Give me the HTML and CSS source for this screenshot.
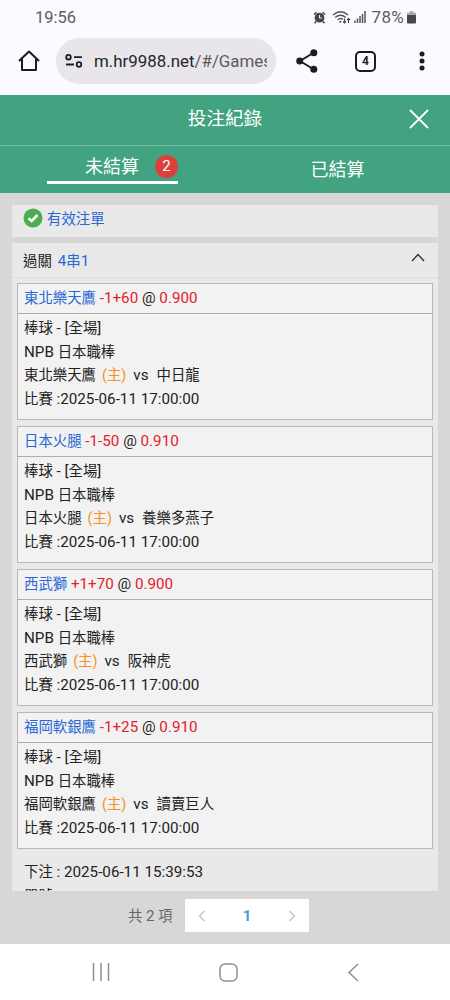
FILE: index.html
```html
<!DOCTYPE html>
<html lang="zh-Hant">
<head>
  <meta charset="UTF-8">
  <meta name="viewport" content="width=device-width, initial-scale=1">
  <title>投注紀錄</title>
  <link rel="stylesheet" href="styles.css">
</head>
<body>
<div class="status-bar">
  <span class="clock">19:56</span>
  <div class="status-icons">
    <svg class="alarm" width="13" height="13" viewBox="0 0 13 13">
      <circle cx="6.5" cy="6.7" r="4.9" fill="#46464c"/>
      <path d="M1 3.5L3.5 1.2M12 3.5L9.5 1.2M3 10.5L1.5 12.3M10 10.5L11.5 12.3" stroke="#46464c" stroke-width="1.5" fill="none"/>
      <path d="M6.5 4V7H8.8" stroke="#fbfaff" stroke-width="1" fill="none"/>
    </svg>
    <svg class="wifi" width="19" height="15" viewBox="0 0 19 15">
      <path d="M1 5Q8.500-1.500 16 5M3.200 7.500Q8.500 3 13.800 7.500M5.500 9.800Q8.500 7.300 11 9.500" stroke="#55555b" stroke-width="1.300" fill="none"/>
      <circle cx="8.300" cy="11.800" r="1.100" fill="#55555b"/>
      <path d="M12.500 8.500V13M11 11.500L12.500 13L14 11.500M16.500 13V8.500M15 10L16.500 8.500L18 10" stroke="#46464c" stroke-width="1.100" fill="none"/>
    </svg>
    <svg class="signal" width="12" height="12" viewBox="0 0 12 12">
      <path d="M1 12V9.500M3.500 12V7.500M6 12V5M8.500 12V3M11 12V0" stroke="#55555b" stroke-width="1.500"/>
    </svg>
    <span class="battery-text">78%</span>
    <svg class="battery" width="9" height="13" viewBox="0 0 9 13">
      <path d="M3 0H6V1.500H8Q9 1.500 9 2.500V4H0V2.500Q0 1.500 1 1.500H3Z" fill="#a9a9ae"/>
      <path d="M0 4H9V11.500Q9 12.500 8 12.500H1Q0 12.500 0 11.500Z" fill="#46464c"/>
    </svg>
  </div>
</div>

<div class="browser-bar">
  <svg class="home" width="22" height="22" viewBox="0 0 22 22">
    <path d="M1 11L11 1.500L21 11M4 9V20H18V9" stroke="#1b1b21" stroke-width="2" fill="none" stroke-linejoin="round"/>
  </svg>
  <div class="address">
    <svg width="18" height="14" viewBox="0 0 18 14" stroke="#1f1f25" stroke-width="1.800" fill="none">
      <circle cx="3.500" cy="3.200" r="2.300"/>
      <path d="M9 3.200H17M1 10.500H9"/>
      <circle cx="14" cy="10.500" r="2.300"/>
    </svg>
    <span class="url">m.hr9988.net<span class="path">/#/Games</span></span>
  </div>
  <svg class="share" width="22" height="24" viewBox="0 0 22 24">
    <path d="M18 3.500L4 12L18 20.500" stroke="#1b1b21" stroke-width="2" fill="none"/>
    <g fill="#1b1b21">
      <circle cx="17.800" cy="3.700" r="3.500"/>
      <circle cx="3.700" cy="12" r="3.500"/>
      <circle cx="17.800" cy="20.300" r="3.500"/>
    </g>
  </svg>
  <span class="tab-count">4</span>
  <svg class="more" width="6" height="20" viewBox="0 0 6 20" fill="#1b1b21">
    <circle cx="3" cy="3" r="2.500"/>
    <circle cx="3" cy="10" r="2.500"/>
    <circle cx="3" cy="17" r="2.500"/>
  </svg>
</div>

<header class="header">
  <h1>投注紀錄</h1>
  <svg class="close" width="20" height="20" viewBox="0 0 20 20">
    <path d="M1 1L19 19M19 1L1 19" stroke="#fff" stroke-width="1.800"/>
  </svg>
</header>
<nav class="tabs">
  <div class="tab active"><span>未結算</span><span class="badge">2</span></div>
  <div class="tab"><span>已結算</span></div>
</nav>

<main class="main">
  <div class="list">
    <div class="valid">
      <svg width="20" height="20" viewBox="0 0 20 20">
        <circle cx="10" cy="10" r="9.500" fill="#4aad50"/>
        <path d="M5.500 10.200L8.600 13L14.500 7" stroke="#fff" stroke-width="2.500" fill="none"/>
      </svg>
      <span>有效注單</span>
    </div>
    <section class="ticket">
      <div class="ticket-head">
        <span>過關<span class="blue combo"><span class="en">4</span>串<span class="en">1</span></span></span>
        <svg width="14" height="9" viewBox="0 0 14 9">
          <path d="M1 8L7 1.500L13 8" stroke="#333" stroke-width="1.400" fill="none"/>
        </svg>
      </div>
      <div class="bets">
        <article class="bet">
          <h2><span class="blue">東北樂天鷹</span><span class="en"> <span class="red">-1+60</span> @ <span class="red">0.900</span></span></h2>
          <div class="info">
            <p>棒球<span class="en"> - [</span>全場<span class="en">]</span></p>
            <p><span class="en">NPB </span>日本職棒</p>
            <p>東北樂天鷹<span class="host">(主)</span><span class="en">vs</span><span class="away">中日龍</span></p>
            <p>比賽<span class="en"> :2025-06-11 17:00:00</span></p>
          </div>
        </article>
        <article class="bet">
          <h2><span class="blue">日本火腿</span><span class="en"> <span class="red">-1-50</span> @ <span class="red">0.910</span></span></h2>
          <div class="info">
            <p>棒球<span class="en"> - [</span>全場<span class="en">]</span></p>
            <p><span class="en">NPB </span>日本職棒</p>
            <p>日本火腿<span class="host">(主)</span><span class="en">vs</span><span class="away">養樂多燕子</span></p>
            <p>比賽<span class="en"> :2025-06-11 17:00:00</span></p>
          </div>
        </article>
        <article class="bet">
          <h2><span class="blue">西武獅</span><span class="en"> <span class="red">+1+70</span> @ <span class="red">0.900</span></span></h2>
          <div class="info">
            <p>棒球<span class="en"> - [</span>全場<span class="en">]</span></p>
            <p><span class="en">NPB </span>日本職棒</p>
            <p>西武獅<span class="host">(主)</span><span class="en">vs</span><span class="away">阪神虎</span></p>
            <p>比賽<span class="en"> :2025-06-11 17:00:00</span></p>
          </div>
        </article>
        <article class="bet">
          <h2><span class="blue">福岡軟銀鷹</span><span class="en"> <span class="red">-1+25</span> @ <span class="red">0.910</span></span></h2>
          <div class="info">
            <p>棒球<span class="en"> - [</span>全場<span class="en">]</span></p>
            <p><span class="en">NPB </span>日本職棒</p>
            <p>福岡軟銀鷹<span class="host">(主)</span><span class="en">vs</span><span class="away">讀賣巨人</span></p>
            <p>比賽<span class="en"> :2025-06-11 17:00:00</span></p>
          </div>
        </article>
      </div>
      <div class="summary">
        <p>下注<span class="en"> : 2025-06-11 15:39:53</span></p>
        <p>單號 :</p>
      </div>
    </section>
  </div>
  <div class="pagination">
    <span class="total">共 <span class="en">2</span> 項</span>
    <div class="pager">
      <svg width="8" height="12" viewBox="0 0 8 12"><path d="M6.500 1L1.500 6L6.500 11" stroke="#c8c8cc" stroke-width="1.500" fill="none"/></svg>
      <span class="page">1</span>
      <svg width="8" height="12" viewBox="0 0 8 12"><path d="M1.500 1L6.500 6L1.500 11" stroke="#c8c8cc" stroke-width="1.500" fill="none"/></svg>
    </div>
  </div>
</main>

<footer class="nav-bar">
  <svg width="18" height="18" viewBox="0 0 18 18"><path d="M1.500 0V18M9 0V18M16.500 0V18" stroke="#8f8f8f" stroke-width="1.500"/></svg>
  <svg width="19" height="19" viewBox="0 0 19 19"><rect x="1" y="1" width="17" height="17" rx="5" stroke="#8f8f8f" stroke-width="1.500" fill="none"/></svg>
  <svg width="12" height="19" viewBox="0 0 12 19"><path d="M11 1L2 9.500L11 18" stroke="#8f8f8f" stroke-width="1.500" fill="none"/></svg>
</footer>
</body>
</html>
```
FILE: styles.css
```css
* {
  margin: 0;
  padding: 0;
  box-sizing: border-box;
}

body {
  width: 450px;
  height: 1000px;
  overflow: hidden;
  display: flex;
  flex-direction: column;
  background: #fbfaff;
  color: #222;
  font-family: Roboto, "Noto Sans CJK TC", sans-serif;
  font-size: 14.4px;
}

svg {
  display: block;
  flex: none;
}

/* latin text and numbers */
.en {
  font-size: 15.2px;
  line-height: 1;
  white-space: pre;
}

.status-bar {
  height: 34px;
  padding: 0 34px 0 35px;
  display: flex;
  justify-content: space-between;
  align-items: center;
  font-size: 16.5px;
  color: #5d5d63;
}

.status-icons {
  display: flex;
  align-items: center;
}

.wifi {
  margin-left: 6px;
}

.signal {
  margin-left: 3px;
}

.battery-text {
  margin: 0 3px 0 6px;
  font-size: 17px;
  letter-spacing: 0.3px;
}

.browser-bar {
  height: 61px;
  padding: 0 25px 7px 18px;
  display: flex;
  align-items: center;
}

.address {
  width: 220px;
  height: 46px;
  margin-left: 16px;
  padding: 0 9px;
  border-radius: 23px;
  background: #e8e6eb;
  display: flex;
  align-items: center;
}

.url {
  width: 174px;
  margin-left: 11px;
  overflow: hidden;
  white-space: nowrap;
  font-size: 16.9px;
  color: #25252a;
}

.path {
  color: #5b5b62;
}

.share {
  margin-left: 20px;
}

.tab-count {
  width: 21px;
  height: 21px;
  margin-left: 37px;
  border: 2px solid #1b1b21;
  border-radius: 5px;
  font-size: 12px;
  font-weight: bold;
  line-height: 17px;
  text-align: center;
}

.more {
  margin-left: 43px;
}

.header {
  position: relative;
  height: 51px;
  background: #42a380;
  color: #fff;
  border-bottom: 1px solid #76bda3;
}

.header h1 {
  font-size: 18.6px;
  font-weight: normal;
  line-height: 49px;
  text-align: center;
}

.close {
  position: absolute;
  top: 14px;
  right: 21px;
}

.tabs {
  height: 47px;
  display: flex;
  background: #42a380;
  color: #fff;
  font-size: 18px;
}

.tab {
  width: 225px;
  line-height: 47px;
  text-align: center;
}

.tab.active {
  width: 131px;
  height: 38px;
  margin: 0 47px;
  padding-top: 5px;
  display: flex;
  align-items: center;
  justify-content: flex-end;
  border-bottom: 3px solid #fff;
}

.badge {
  width: 23px;
  height: 23px;
  margin-left: 16px;
  border-radius: 50%;
  background: #dd403a;
  font-size: 15px;
  line-height: 23px;
  text-align: center;
}

.main {
  height: 751px;
  padding: 12px 12px 0;
  background: #d7d7d7;
}

.list {
  height: 686px;
  overflow: hidden;
}

.valid {
  height: 32px;
  padding: 0 11px 7px;
  display: flex;
  align-items: center;
  gap: 4px;
  background: #e9e9e9;
  color: #2a67d5;
}

.ticket {
  margin-top: 6px;
  background: #e9e9e9;
}

.ticket-head {
  height: 35px;
  padding: 0 13px 2px 11px;
  display: flex;
  align-items: center;
  justify-content: space-between;
  border-bottom: 1px solid #dcdcdc;
}

.ticket-head svg {
  margin-bottom: 3px;
}

.combo {
  margin-left: 6px;
}

.bets {
  padding: 5px 5px 0;
  display: flex;
  flex-direction: column;
  gap: 6px;
}

.bet {
  height: 137px;
  border: 1px solid #b8b8b8;
  background: #f2f2f2;
}

.bet h2 {
  height: 30px;
  padding-left: 6px;
  border-bottom: 1px solid #acacac;
  font-size: inherit;
  font-weight: normal;
  line-height: 29px;
}

.info {
  padding: 3px 6px;
  line-height: 23.5px;
}

.blue {
  color: #2a67d5;
}

.red {
  color: #e3202b;
}

.host {
  margin: 0 7px 0 6px;
  color: #f29127;
}

.away {
  margin-left: 8px;
}

.summary {
  padding: 12px 12px 0;
  line-height: 23.5px;
}

.pagination {
  padding: 8px 0 0 116px;
  display: flex;
  align-items: center;
}

.total {
  width: 57px;
  padding-bottom: 2px;
  color: #666;
  white-space: nowrap;
}

.pager {
  width: 124px;
  height: 33px;
  padding: 0 13px;
  display: flex;
  align-items: center;
  justify-content: space-between;
  background: #fff;
}

.page {
  color: #499bdf;
  font-size: 15px;
  font-weight: bold;
}

.nav-bar {
  height: 56px;
  padding: 0 91px 0 92px;
  display: flex;
  align-items: center;
  justify-content: space-between;
  background: #fff;
}
```
